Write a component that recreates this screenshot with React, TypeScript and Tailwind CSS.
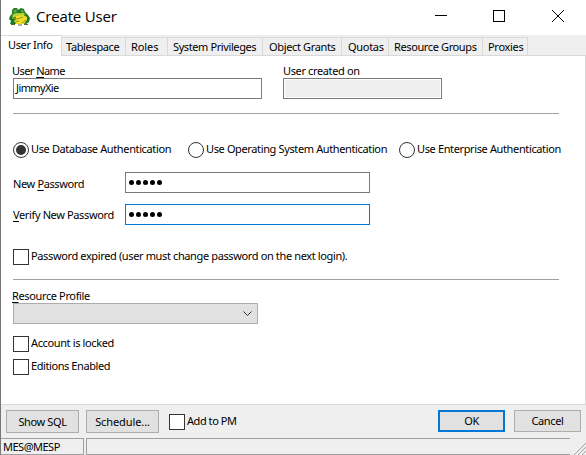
import type { ReactNode } from "react";

const tabs = [
  { label: "Tablespace", cls: "w-[64px] pl-[4px] tracking-[-0.35px]" },
  { label: "Roles", cls: "w-[42px] pl-[5px] tracking-[-0.1px]" },
  { label: "System Privileges", cls: "w-[95px] pl-[5px] tracking-[-0.4px]" },
  { label: "Object Grants", cls: "w-[79px] pl-[6px] tracking-[-0.35px]" },
  { label: "Quotas", cls: "w-[47px] pl-[6px] tracking-[-0.3px]" },
  { label: "Resource Groups", cls: "w-[94px] pl-[5px] tracking-[-0.38px]" },
  { label: "Proxies", cls: "w-[45px] pl-[5px] tracking-[-0.3px]" },
];

function Key({ children }: { children: ReactNode }) {
  return <span className="underline decoration-1 underline-offset-2">{children}</span>;
}

function Check({ children, cls = "" }: { children: ReactNode; cls?: string }) {
  return (
    <label className={`flex h-4 items-center gap-[2px] ${cls}`}>
      <span className="size-4 shrink-0 border border-[#333] bg-white" />
      <span className="-mt-[2px]">{children}</span>
    </label>
  );
}

function Radio({ children, on, cls }: { children: ReactNode; on?: boolean; cls: string }) {
  return (
    <label className={`flex h-4 shrink-0 items-center gap-[2px] ${cls}`}>
      <span className="flex size-4 shrink-0 items-center justify-center rounded-full border border-[#333] bg-white">
        {on && <span className="size-[10px] rounded-full bg-[#333]" />}
      </span>
      <span className="-mt-[2px]">{children}</span>
    </label>
  );
}

function Dots() {
  return (
    <span className="flex gap-[2px] pl-[3px]">
      {[0, 1, 2, 3, 4].map((i) => (
        <span key={i} className="size-[5px] rounded-full bg-black" />
      ))}
    </span>
  );
}

function ToadIcon() {
  return (
    <svg width="21" height="19" viewBox="0 0 21 19" className="mt-[-2px] shrink-0">
      <path d="M1 9 L3 7 L3 3 L5 1 L8 1 L9 3 L12 1 L15 2 L16 5 L19 8 L21 11 L20 15 L17 17 H5 L1 17 L2 14 L0 12Z" fill="#1d7a26" />
      <path d="M4 4 L7 2 L8 5 L5 6Z M12 3 L14 3 L15 6 L12 5Z" fill="#5fae3a" />
      <path d="M4 7 L8 6 L12 6 L15 6 L16 8 L12 10 L7 10 L3 11Z" fill="#b5cf33" />
      <path d="M7 9 L14 8 L18 10 L18 13 L15 17 H7 L5 14 L7 12Z" fill="#f0dc28" />
      <path d="M3 11 L8 12 L14 10 M6 15 L10 14 M13 16 L17 13" fill="none" stroke="#8f9a1c" />
      <path d="M2 17.5 H6 M9 18 H13 M15 17.5 H19" stroke="#5d6a2a" />
    </svg>
  );
}

export default function App() {
  return (
    <div className="flex h-[455px] w-[586px] flex-col overflow-hidden border-l border-[#777] bg-[#efefef] font-['Noto_Sans',sans-serif] text-[11px] leading-[14px] tracking-[-0.37px] whitespace-nowrap text-black">
      <header className="flex h-[35px] shrink-0 items-center bg-white pl-2">
        <ToadIcon />
        <h1 className="mt-[-3px] ml-[6px] font-['Open_Sans',sans-serif] text-[15px] leading-5 tracking-[-0.17px]">Create User</h1>
        <svg width="131" height="14" viewBox="0 0 131 14" className="mt-[-3px] mr-[21px] ml-auto" fill="none" stroke="#000" shapeRendering="crispEdges">
          <path d="M1 6.5h12" />
          <rect x="59.5" y="1.5" width="11" height="11" />
          <path d="M118 1l12 12M130 1l-12 12" shapeRendering="auto" />
        </svg>
      </header>

      <nav className="flex h-[21px] shrink-0 items-end">
        <div className="flex h-[21px] w-[61px] items-center border-t border-r border-[#d9d9d9] bg-white pl-[7px]">
          <span className="-mt-[2px]">User Info</span>
        </div>
        <div className="flex h-[21px] flex-1 items-end border-b border-[#d9d9d9]">
          {tabs.map((t) => (
            <div key={t.label} className={`flex h-[18px] items-center border-t border-r border-[#d9d9d9] ${t.cls}`}>
              {t.label}
            </div>
          ))}
        </div>
      </nav>

      <main className="flex h-[348px] shrink-0 flex-col border-r border-[#d9d9d9] bg-white pt-2 pl-3">
        <div className="-ml-px flex h-[14px]">
          <span className="w-[271px] tracking-[-0.55px]">User <Key>N</Key>ame</span>
          <span>User created on</span>
        </div>
        <div className="flex h-[21px] gap-[21px]">
          <div className="flex w-[249px] items-center border border-[#7a7a7a] pb-px pl-[2px] tracking-[-0.6px]">JimmyXie</div>
          <div className="w-[159px] border border-[#7a7a7a] bg-[#efefef] shadow-[inset_0_0_0_1px_#fff]" />
        </div>
        <div className="mt-[14px] h-px w-[546px] shrink-0 bg-[#a0a0a0]" />

        <div className="mt-[28px] flex h-4">
          <Radio on cls="w-[175px]">Use Database Authentication</Radio>
          <Radio cls="w-[211px]">Use Operating System Authentication</Radio>
          <Radio cls="w-[170px]">Use Enterprise Authentication</Radio>
        </div>

        <div className="mt-[14px] flex h-[21px] items-center">
          <span className="w-[112px] pt-[3px]">New <Key>P</Key>assword</span>
          <div className="flex h-[21px] w-[245px] items-center border border-[#7a7a7a]"><Dots /></div>
        </div>
        <div className="mt-[11px] flex h-[21px] items-center">
          <span className="w-[112px] pt-[1px]"><Key>V</Key>erify New Password</span>
          <div className="flex h-[21px] w-[245px] items-center border border-[#0078d7]"><Dots /></div>
        </div>

        <Check cls="mt-6">Password expired (user must change password on the next login).</Check>
        <div className="mt-[14px] h-px w-[546px] shrink-0 bg-[#a0a0a0]" />

        <div className="mt-[9px] -ml-px h-[14px]"><Key>R</Key>esource Profile</div>
        <div className="flex h-[21px] w-[245px] items-center justify-end border border-[#adadad] bg-[#e1e1e1] pr-[5px]">
          <svg width="9" height="6" viewBox="0 0 9 6" fill="none" stroke="#333"><path d="M.5 .5l4 4 4-4" /></svg>
        </div>
        <Check cls="mt-3">Account is locked</Check>
        <Check cls="mt-[7px] tracking-[-0.42px]">Editions Enabled</Check>
      </main>

      <footer className="flex h-[34px] shrink-0 items-start border-t border-[#d9d9d9] pt-[5px] pl-[5px]">
        <button className="h-[23px] w-[73px] border border-[#adadad] bg-[#e1e1e1]">Show SQL</button>
        <button className="ml-[7px] h-[23px] w-[73px] border border-[#adadad] bg-[#e1e1e1] tracking-[-0.1px]">Schedule...</button>
        <Check cls="mt-1 ml-[10px] tracking-[-0.45px]">Add to PM</Check>
        <button className="mr-[9px] ml-auto h-[22px] w-[67px] border-2 border-[#0078d7] bg-[#e1e1e1]">OK</button>
        <button className="mr-[5px] h-[22px] w-[67px] border border-[#adadad] bg-[#e1e1e1]">Cancel</button>
      </footer>

      <div className="flex h-[17px] shrink-0 gap-[2px]">
        <div className="flex w-[83px] items-center border border-l-0 border-[#a0a0a0] pl-[2px] tracking-[-0.5px]">MES@MESP</div>
        <div className="w-[486px] border-y border-l border-[#a0a0a0]" />
        <svg width="14" height="17" viewBox="0 0 14 17" fill="none" stroke="#a0a0a0"><path d="M2 17L14 5M6 17L14 9M10 17L14 13" /></svg>
      </div>
    </div>
  );
}
